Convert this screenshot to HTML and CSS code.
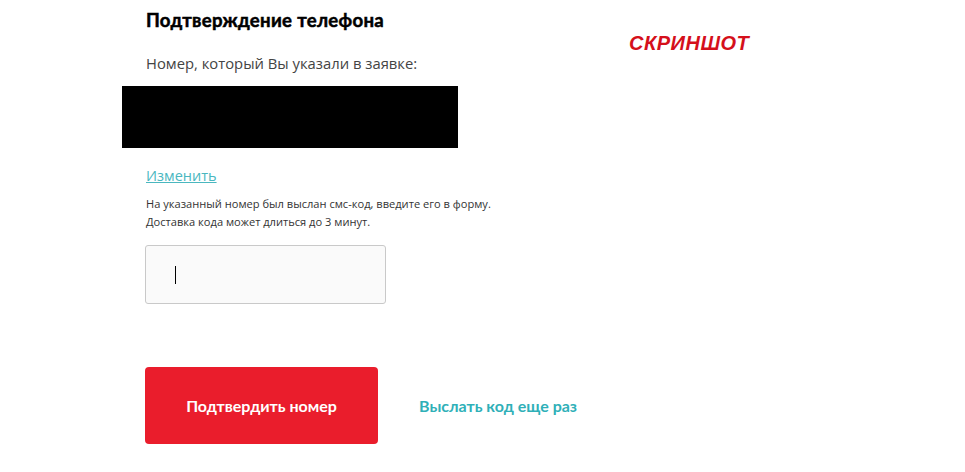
FILE: index.html
```html
<!DOCTYPE html>
<html lang="ru">
<head>
  <meta charset="UTF-8" />
  <title>Подтверждение телефона</title>
  <link rel="stylesheet" href="styles.css">
</head>
<body>
  <div class="page">
    <div class="form">
      <h1>Подтверждение телефона</h1>
      <p class="label">Номер, который Вы указали в заявке:</p>
      <div class="phone"></div>
      <a class="change" href="#">Изменить</a>
      <p class="hint">На указанный номер был выслан смс-код, введите его в форму.<br />Доставка кода может длиться до 3 минут.</p>
      <div class="code"><span class="caret"></span></div>
      <div class="actions">
        <button class="confirm">Подтвердить номер</button>
        <a class="resend" href="#">Выслать код еще раз</a>
      </div>
    </div>
    <div class="stamp">СКРИНШОТ</div>
  </div>
</body>
</html>
```

FILE: styles.css
```css
body {
  margin: 0;
  background: #fff;
  font-family: "Open Sans", sans-serif;
  color: #333;
}
.page {
  display: flex;
  padding-left: 146px;
}
.form {
  width: 440px;
}
h1 {
  margin: 9px 0 0;
  font-family: Lato, sans-serif;
  font-weight: 700;
  font-size: 18.6px;
  line-height: 22px;
  color: #000;
  letter-spacing: 0.3px;
  -webkit-text-stroke: 0.5px #000;
}
.label {
  margin: 22px 0 0;
  font-size: 14.8px;
  line-height: 20px;
  color: #444;
}
.phone {
  margin: 13px 0 0 -24px;
  width: 336px;
  height: 62px;
  background: #000;
}
.change {
  display: inline-block;
  margin-top: 18px;
  font-size: 14.5px;
  line-height: 20px;
  color: #4ab7bf;
}
.hint {
  margin: 9px 0 0;
  font-size: 11.1px;
  line-height: 18px;
  color: #333;
}
.code {
  margin: 14px 0 0 -1px;
  width: 210px;
  height: 57px;
  border: 1px solid #c9c9c9;
  border-radius: 3px;
  background: #fafafa;
  display: flex;
  align-items: center;
  padding-left: 29px;
}
.caret {
  width: 1px;
  height: 18px;
  background: #000;
}
.actions {
  margin-top: 63px;
  display: flex;
  align-items: center;
  gap: 41px;
}
.confirm {
  margin-left: -1px;
  width: 233px;
  height: 77px;
  border: none;
  border-radius: 4px;
  background: #ea1d2c;
  color: #fff;
  font-family: Lato, sans-serif;
  font-weight: 700;
  font-size: 16px;
  cursor: pointer;
}
.resend {
  font-family: Lato, sans-serif;
  font-weight: 700;
  font-size: 16px;
  color: #2fb0b8;
  text-decoration: none;
}
.stamp {
  margin: 31px 0 0 43px;
  font-family: "Liberation Sans", sans-serif;
  font-style: italic;
  font-weight: 700;
  font-size: 20px;
  line-height: 24px;
  color: #d5101b;
  letter-spacing: 0.5px;
  height: 24px;
}
```
